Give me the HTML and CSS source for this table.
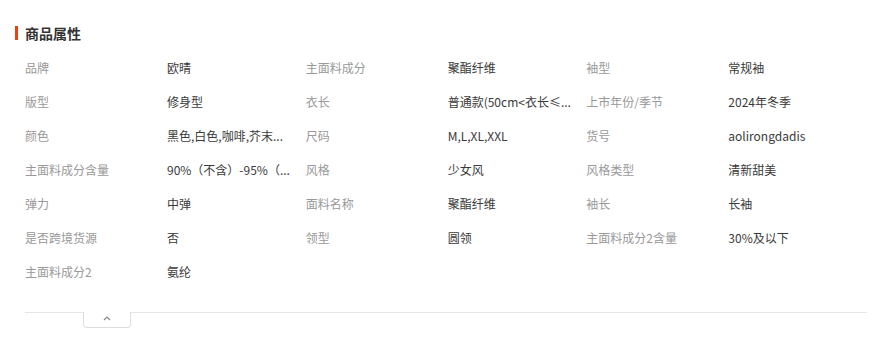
FILE: index.html
```html
<!DOCTYPE html>
<html lang="zh">
<head>
<meta charset="utf-8">
<link rel="stylesheet" href="styles.css">
</head>
<body>
<div class="panel">
  <div class="title"><span class="bar"></span><span class="title-text">商品属性</span></div>
  <div class="grid">
    <div class="item"><span class="label">品牌</span><span class="value">欧晴</span></div>
    <div class="item"><span class="label">主面料成分</span><span class="value">聚酯纤维</span></div>
    <div class="item"><span class="label">袖型</span><span class="value">常规袖</span></div>
    <div class="item"><span class="label">版型</span><span class="value">修身型</span></div>
    <div class="item"><span class="label">衣长</span><span class="value">普通款(50cm&lt;衣长≤...</span></div>
    <div class="item"><span class="label">上市年份/季节</span><span class="value">2024年冬季</span></div>
    <div class="item"><span class="label">颜色</span><span class="value">黑色,白色,咖啡,芥末...</span></div>
    <div class="item"><span class="label">尺码</span><span class="value">M,L,XL,XXL</span></div>
    <div class="item"><span class="label">货号</span><span class="value">aolirongdadis</span></div>
    <div class="item"><span class="label">主面料成分含量</span><span class="value">90%（不含）-95%（...</span></div>
    <div class="item"><span class="label">风格</span><span class="value">少女风</span></div>
    <div class="item"><span class="label">风格类型</span><span class="value">清新甜美</span></div>
    <div class="item"><span class="label">弹力</span><span class="value">中弹</span></div>
    <div class="item"><span class="label">面料名称</span><span class="value">聚酯纤维</span></div>
    <div class="item"><span class="label">袖长</span><span class="value">长袖</span></div>
    <div class="item"><span class="label">是否跨境货源</span><span class="value">否</span></div>
    <div class="item"><span class="label">领型</span><span class="value">圆领</span></div>
    <div class="item"><span class="label">主面料成分2含量</span><span class="value">30%及以下</span></div>
    <div class="item"><span class="label">主面料成分2</span><span class="value">氨纶</span></div>
  </div>
  <div class="divider">
    <span class="seg seg-left"></span>
    <span class="tab"><svg width="8" height="6" viewBox="0 0 8 6"><polyline points="1,5 4,2 7,5" fill="none" stroke="#8a8a8a" stroke-width="1.2"/></svg></span>
    <span class="seg seg-right"></span>
  </div>
</div>
</body>
</html>
```

FILE: styles.css
```css
* { box-sizing: border-box; }
body {
  margin: 0;
  background: #fff;
  font-family: "Noto Sans CJK SC", "Noto Sans", sans-serif;
}
.panel {
  padding: 23px 29px 0 15px;
}
.title {
  display: flex;
  align-items: center;
  height: 20px;
}
.bar {
  width: 3px;
  height: 14px;
  background: #f0400f;
  margin-right: 7px;
}
.title-text {
  font-size: 14px;
  font-weight: 700;
  color: #333;
  line-height: 20px;
}
.grid {
  margin-top: 7px;
  padding-left: 10px;
  display: grid;
  grid-template-columns: repeat(3, 1fr);
}
.item {
  display: flex;
  align-items: center;
  height: 34px;
  font-size: 12px;
  min-width: 0;
}
.label {
  width: 142px;
  flex: none;
  color: #999;
}
.value {
  flex: 1;
  min-width: 0;
  color: #3a3a3a;
  white-space: nowrap;
}
.divider {
  margin-top: 24px;
  padding-left: 10px;
  display: flex;
  align-items: flex-start;
}
.seg {
  border-top: 1px solid #e6e6e6;
  height: 1px;
}
.seg-left { width: 58px; }
.seg-right { flex: 1; }
.tab {
  width: 48px;
  height: 16px;
  border: 1px solid #dedede;
  border-top: none;
  border-radius: 0 0 4px 4px;
  display: flex;
  justify-content: center;
  align-items: center;
  padding-bottom: 3px;
}
```
